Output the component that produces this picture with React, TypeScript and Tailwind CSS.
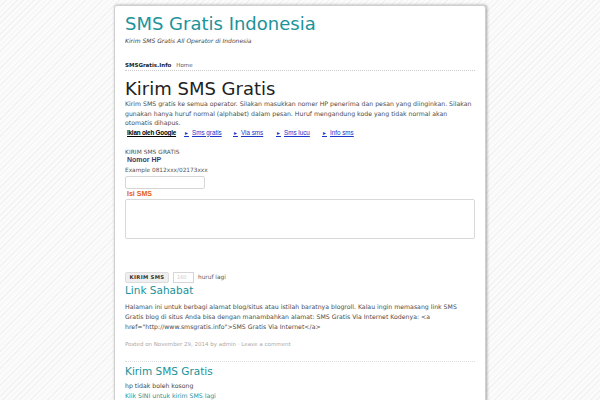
import React from 'react';

const adLinks = [
  { label: 'Sms gratis', w: 'w-[49px]' },
  { label: 'Via sms', w: 'w-[43px]' },
  { label: 'Sms lucu', w: 'w-[46px]' },
  { label: 'Info sms', w: 'w-[40px]' },
];

function AdRow() {
  return (
    <div className="flex items-center pl-[2px] font-['Liberation_Sans',sans-serif] text-[6.3px] leading-[9px]">
      <span className="w-[57px] font-bold underline text-black tracking-[-0.2px]">Iklan oleh Google</span>
      {adLinks.map((l) => (
        <span key={l.label} className={`${l.w} text-[#1a35c9] underline`}>
          <span className="text-[5px] mr-[3px]">►</span>
          {l.label}
        </span>
      ))}
    </div>
  );
}

function SmsForm() {
  return (
    <div className="mt-[10.5px] text-[5.8px] text-[#4a4a4a]">
      <div className="leading-[8px] tracking-[0.1px]">KIRIM SMS GRATIS</div>
      <div className="pl-[2px] font-['Liberation_Sans',sans-serif] text-[7px] font-bold text-[#3d3d6f] leading-[8px]">Nomor HP</div>
      <div className="leading-[8px] mt-[2px] text-[#555]">Example 0812xxx/02173xxx</div>
      <div className="w-[80px] h-[13px] border border-[#d6d6d6] rounded-[2px] bg-white mt-[2px]" />
      <div className="pl-[2px] font-['Liberation_Sans',sans-serif] text-[7px] font-bold text-[#e2620c] leading-[8px] mt-[1px]">Isi SMS</div>
      <div className="w-full h-[40px] border border-[#d9d9d9] rounded-[2px] bg-white mt-[1px]" />
      <div className="flex items-center gap-[4px] mt-[33px]">
        <div className="h-[11px] w-[44px] flex items-center justify-center bg-[#efefef] border border-[#dcdcdc] rounded-[2px] font-bold text-[5.3px] text-[#333] tracking-[0.3px]">
          KIRIM SMS
        </div>
        <div className="h-[11px] w-[21px] border border-[#d6d6d6] bg-white text-[5px] text-[#ccc] flex items-center pl-[3px]">160</div>
        <span className="text-[#555]">huruf lagi</span>
      </div>
    </div>
  );
}

export default function App() {
  return (
    <div className="w-[600px] h-[400px] overflow-hidden bg-[repeating-linear-gradient(135deg,#f2f2f2_0px,#f2f2f2_1px,#fbfbfb_1px,#fbfbfb_4px)] font-['DejaVu_Sans',sans-serif]">
      <div className="mx-auto mt-[5px] w-[372px] min-h-[400px] bg-white border border-[#cfcfcf] rounded-t-[3px] shadow-[1px_0_3px_rgba(0,0,0,0.35)] px-[10px] pt-[6px]">
        <h1 className="text-[18px] leading-[24px] text-[#21929a]">SMS Gratis Indonesia</h1>
        <p className="italic text-[6px] leading-[8px] text-[#444] mt-[1px]">Kirim SMS Gratis All Operator di Indonesia</p>

        <nav className="mt-[16px] flex gap-[5px] text-[5.5px] leading-[8px] pb-[1px] border-b border-dotted border-[#ccc]">
          <span className="font-bold text-[#222]">SMSGratis.Info</span>
          <span className="text-[#555]">Home</span>
        </nav>

        <h2 className="mt-[8px] text-[18px] leading-[20px] text-[#222]">Kirim SMS Gratis</h2>
        <p className="text-[6.2px] leading-[9.5px] text-[#4a4a4a]">
          Kirim SMS gratis ke semua operator. Silakan masukkan nomer HP penerima dan pesan yang diinginkan. Silakan gunakan hanya huruf normal (alphabet) dalam pesan. Huruf mengandung kode yang tidak normal akan otomatis dihapus.
        </p>
        <AdRow />
        <SmsForm />

        <h3 className="text-[10.5px] leading-[14px] text-[#21929a]">Link Sahabat</h3>
        <p className="text-[6.2px] leading-[10px] text-[#4a4a4a] mt-[5px]">
          Halaman ini untuk berbagi alamat blog/situs atau istilah baratnya blogroll. Kalau ingin memasang link SMS Gratis blog di situs Anda bisa dengan manambahkan alamat: SMS Gratis Via Internet Kodenya: &lt;a href="http://www.smsgratis.info"&gt;SMS Gratis Via Internet&lt;/a&gt;
        </p>
        <div className="mt-[8px] text-[5.5px] leading-[8px] text-[#aaa] pb-[13px] border-b border-dotted border-[#ddd]">
          Posted on November 29, 2014 by admin · Leave a comment
        </div>

        <h3 className="text-[10.5px] leading-[14px] text-[#21929a] mt-[2px]">Kirim SMS Gratis</h3>
        <p className="text-[6.2px] leading-[10px] text-[#444] mt-[3px]">hp tidak boleh kosong</p>
        <p className="text-[6.2px] leading-[10px] text-[#21929a]">Klik SINI untuk kirim SMS lagi</p>
      </div>
    </div>
  );
}
